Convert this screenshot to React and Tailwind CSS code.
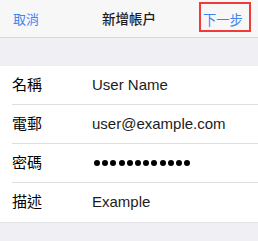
import React from 'react';

const rows = [
    { label: '名稱', value: 'User Name' },
    { label: '電郵', value: 'user@example.com' },
    { label: '密碼', value: null },
    { label: '描述', value: 'Example' },
];

const font = { fontFamily: '"Liberation Sans", "Noto Sans CJK TC", sans-serif' };

const PasswordDots = () => (
    <div className="flex items-center gap-[2.2px] pl-[2px]">
        {Array.from({ length: 12 }).map((_, i) => (
            <span key={i} className="block w-[6px] h-[6px] rounded-full bg-black" />
        ))}
    </div>
);

const App = () => {
    return (
        <div className="w-[258px] h-[241px] bg-[#efeff4] overflow-hidden" style={font}>
            {/* Barra de navegacion */}
            <div className="h-[38px] bg-[#f7f7f8] border-b border-[#d9d9dd] grid grid-cols-3 items-start">
                <div className="pl-[13px] pt-[11px] text-[13px] leading-[18px] text-[#3d86f2]">取消</div>
                <div className="pt-[11px] text-center text-[13.5px] leading-[18px] font-medium text-[#1c1c1e]">
                    新增帳户
                </div>
                <div className="flex justify-end pr-[7px] pt-[2px]">
                    <div className="w-[52px] h-[30px] border-2 border-[#f03b3b] pl-[2px] pt-[8px] text-[13.3px] leading-[18px] text-[#3d86f2]">
                        下一步
                    </div>
                </div>
            </div>

            {/* Espacio gris */}
            <div className="h-[28px]" />

            {/* Formulario */}
            <div className="bg-white border-b border-[#e3e3e6]">
                {rows.map((row, i) => (
                    <div key={row.label} className="pl-[12px]">
                        <div
                            className={`h-[39px] flex items-center ${
                                i < rows.length - 1 ? 'border-b border-[#dedee2]' : ''
                            }`}
                        >
                            <div className="w-[80px] text-[15px] text-black">{row.label}</div>
                            {row.value ? (
                                <div className="text-[15px] text-[#1c1c1e]">{row.value}</div>
                            ) : (
                                <PasswordDots />
                            )}
                        </div>
                    </div>
                ))}
            </div>
        </div>
    );
};

export default App;
